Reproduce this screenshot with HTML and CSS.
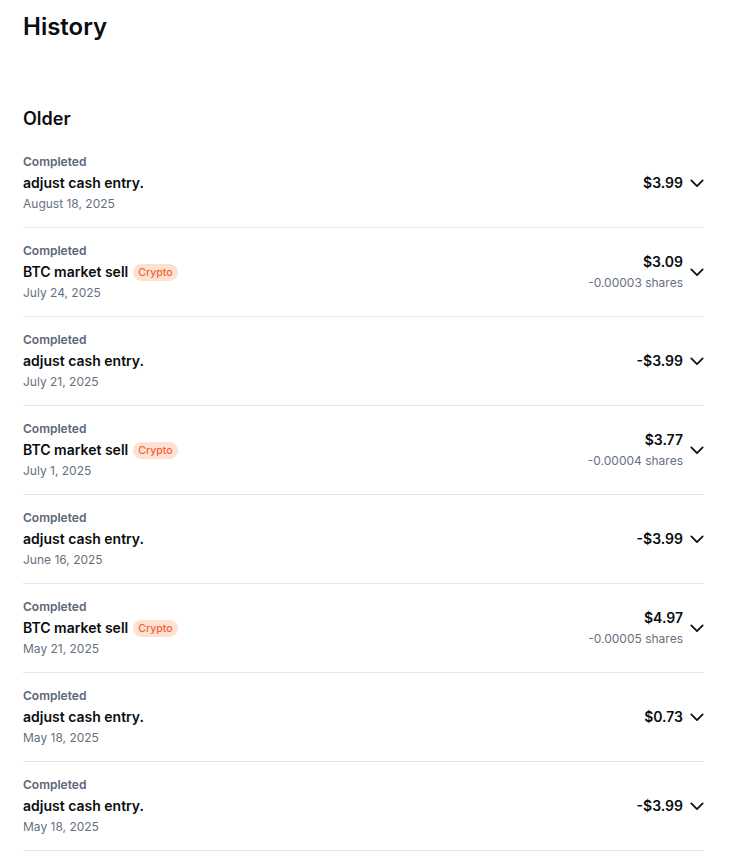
FILE: index.html
```html
<!DOCTYPE html>
<html lang="en">
<head>
  <meta charset="UTF-8" />
  <meta name="viewport" content="width=device-width, initial-scale=1.0"/>
  <title>History</title>
  <link rel="stylesheet" href="styles.css">
</head>
<body>

  <h1 class="page-title">History</h1>

  <section class="group">
    <h2 class="group-title">Older</h2>

    <ul class="tx-list">
      <li class="tx">
        <div class="tx-info">
          <span class="tx-status">Completed</span>
          <span class="tx-name">adjust cash entry.</span>
          <span class="tx-date">August 18, 2025</span>
        </div>
        <div class="tx-amount">
          <span class="amount">$3.99</span>
        </div>
        <svg class="chevron" viewBox="0 0 16 10"><path d="M1.5 1.5 8 8l6.5-6.5"/></svg>
      </li>

      <li class="tx">
        <div class="tx-info">
          <span class="tx-status">Completed</span>
          <span class="tx-name">BTC market sell <span class="badge">Crypto</span></span>
          <span class="tx-date">July 24, 2025</span>
        </div>
        <div class="tx-amount">
          <span class="amount">$3.09</span>
          <span class="shares">-0.00003 shares</span>
        </div>
        <svg class="chevron" viewBox="0 0 16 10"><path d="M1.5 1.5 8 8l6.5-6.5"/></svg>
      </li>

      <li class="tx">
        <div class="tx-info">
          <span class="tx-status">Completed</span>
          <span class="tx-name">adjust cash entry.</span>
          <span class="tx-date">July 21, 2025</span>
        </div>
        <div class="tx-amount">
          <span class="amount">-$3.99</span>
        </div>
        <svg class="chevron" viewBox="0 0 16 10"><path d="M1.5 1.5 8 8l6.5-6.5"/></svg>
      </li>

      <li class="tx">
        <div class="tx-info">
          <span class="tx-status">Completed</span>
          <span class="tx-name">BTC market sell <span class="badge">Crypto</span></span>
          <span class="tx-date">July 1, 2025</span>
        </div>
        <div class="tx-amount">
          <span class="amount">$3.77</span>
          <span class="shares">-0.00004 shares</span>
        </div>
        <svg class="chevron" viewBox="0 0 16 10"><path d="M1.5 1.5 8 8l6.5-6.5"/></svg>
      </li>

      <li class="tx">
        <div class="tx-info">
          <span class="tx-status">Completed</span>
          <span class="tx-name">adjust cash entry.</span>
          <span class="tx-date">June 16, 2025</span>
        </div>
        <div class="tx-amount">
          <span class="amount">-$3.99</span>
        </div>
        <svg class="chevron" viewBox="0 0 16 10"><path d="M1.5 1.5 8 8l6.5-6.5"/></svg>
      </li>

      <li class="tx">
        <div class="tx-info">
          <span class="tx-status">Completed</span>
          <span class="tx-name">BTC market sell <span class="badge">Crypto</span></span>
          <span class="tx-date">May 21, 2025</span>
        </div>
        <div class="tx-amount">
          <span class="amount">$4.97</span>
          <span class="shares">-0.00005 shares</span>
        </div>
        <svg class="chevron" viewBox="0 0 16 10"><path d="M1.5 1.5 8 8l6.5-6.5"/></svg>
      </li>

      <li class="tx">
        <div class="tx-info">
          <span class="tx-status">Completed</span>
          <span class="tx-name">adjust cash entry.</span>
          <span class="tx-date">May 18, 2025</span>
        </div>
        <div class="tx-amount">
          <span class="amount">$0.73</span>
        </div>
        <svg class="chevron" viewBox="0 0 16 10"><path d="M1.5 1.5 8 8l6.5-6.5"/></svg>
      </li>

      <li class="tx">
        <div class="tx-info">
          <span class="tx-status">Completed</span>
          <span class="tx-name">adjust cash entry.</span>
          <span class="tx-date">May 18, 2025</span>
        </div>
        <div class="tx-amount">
          <span class="amount">-$3.99</span>
        </div>
        <svg class="chevron" viewBox="0 0 16 10"><path d="M1.5 1.5 8 8l6.5-6.5"/></svg>
      </li>
    </ul>
  </section>

</body>
</html>
```

FILE: styles.css
```css
body {
  margin: 0;
  font-family: 'Inter', 'Liberation Sans', sans-serif;
  background: #ffffff;
  color: #0b0d10;
  padding: 12px 29px 0 23px;
}

.page-title {
  margin: 0;
  font-size: 24px;
  line-height: 30px;
  font-weight: 600;
}

.group {
  margin-top: 64px;
}

.group-title {
  margin: 0;
  font-size: 18px;
  line-height: 26px;
  font-weight: 600;
}

.tx-list {
  list-style: none;
  margin: 7px 0 0;
  padding: 0;
}

.tx {
  display: flex;
  align-items: center;
  padding: 13px 0;
  border-bottom: 1px solid #e3e5ea;
}

.tx-info {
  flex: 1;
  display: flex;
  flex-direction: column;
}

.tx-status {
  font-size: 12px;
  line-height: 20px;
  font-weight: 600;
  color: #5b6676;
}

.tx-name {
  display: flex;
  align-items: center;
  gap: 5px;
  font-size: 14px;
  line-height: 22px;
  font-weight: 600;
  color: #0b0d10;
}

.tx-date {
  font-size: 12px;
  line-height: 20px;
  color: #667180;
}

.badge {
  display: inline-block;
  padding: 0 5px;
  height: 17px;
  line-height: 17px;
  border-radius: 9px;
  background: #ffe1d1;
  color: #f0633a;
  font-size: 10.5px;
  font-weight: 500;
}

.tx-amount {
  display: flex;
  flex-direction: column;
  align-items: flex-end;
}

.amount {
  font-size: 14px;
  line-height: 22px;
  font-weight: 600;
}

.shares {
  font-size: 12px;
  line-height: 20px;
  color: #667180;
}

.chevron {
  width: 14px;
  height: 9px;
  margin-left: 7px;
  fill: none;
  stroke: #0b0d10;
  stroke-width: 2;
  stroke-linecap: round;
  stroke-linejoin: round;
}
```
